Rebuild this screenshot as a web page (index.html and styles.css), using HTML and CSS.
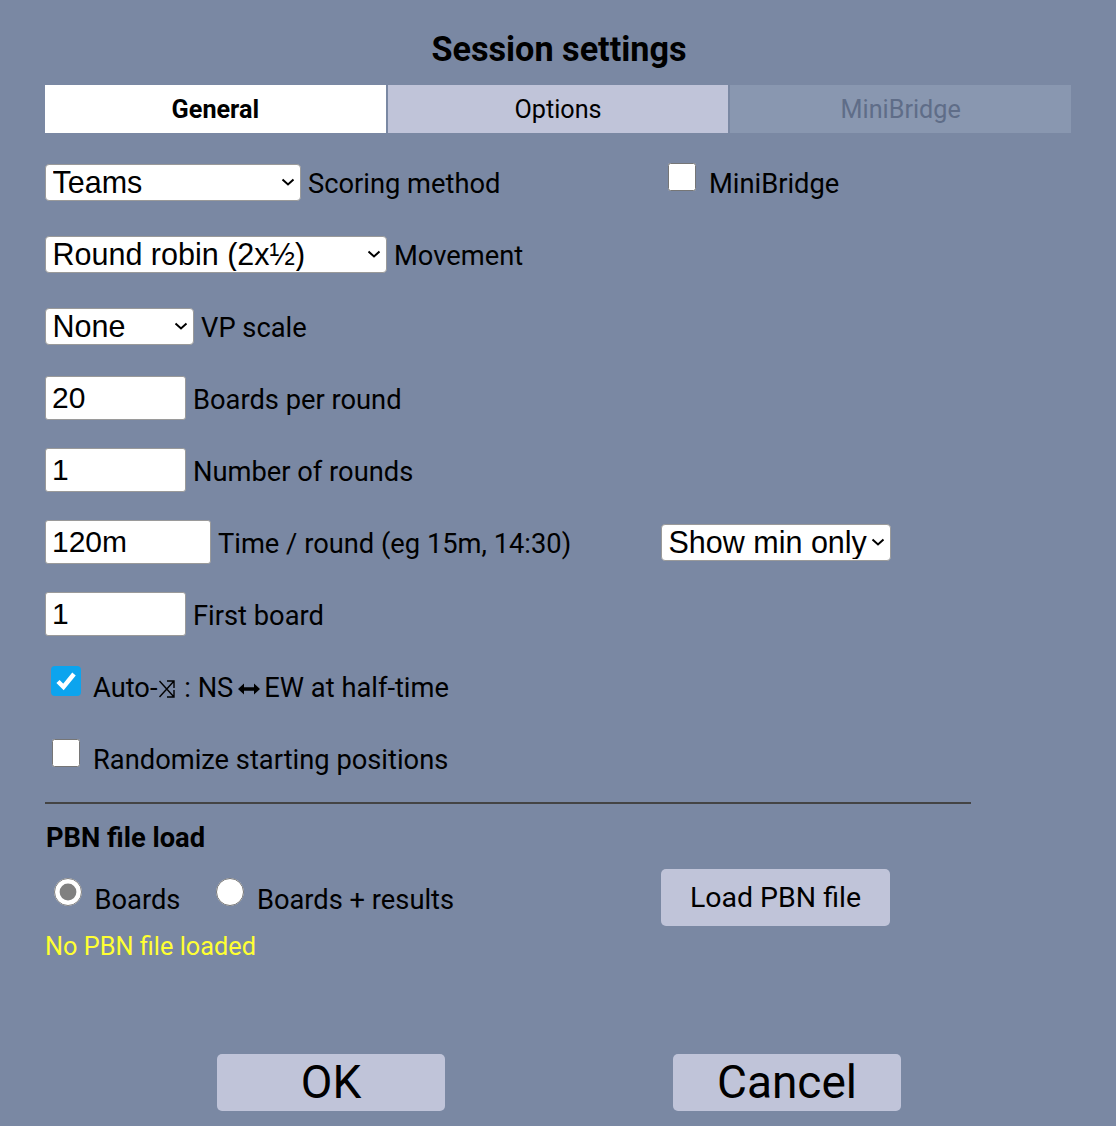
FILE: index.html
```html
<!DOCTYPE html>
<html lang="en">
<head>
<meta charset="utf-8">
<title>Session settings</title>
<link rel="stylesheet" href="styles.css">
</head>
<body>
<main class="dialog">
  <h1 class="title">Session settings</h1>
  <nav class="tabs">
    <div class="tab tab-active">General</div>
    <div class="tab">Options</div>
    <div class="tab tab-disabled">MiniBridge</div>
  </nav>
  <section class="form">
    <div class="row">
      <div class="left">
        <select class="sel sel-scoring"><option>Teams</option></select>
        <span class="label">Scoring method</span>
      </div>
      <div class="right right-check">
        <input type="checkbox" class="check">
        <span class="label">MiniBridge</span>
      </div>
    </div>
    <div class="row">
      <div class="left">
        <select class="sel sel-movement"><option>Round robin (2x½)</option></select>
        <span class="label">Movement</span>
      </div>
    </div>
    <div class="row">
      <div class="left">
        <select class="sel sel-vp"><option>None</option></select>
        <span class="label">VP scale</span>
      </div>
    </div>
    <div class="row">
      <div class="left">
        <input class="num" type="text" value="20">
        <span class="label">Boards per round</span>
      </div>
    </div>
    <div class="row">
      <div class="left">
        <input class="num" type="text" value="1">
        <span class="label">Number of rounds</span>
      </div>
    </div>
    <div class="row">
      <div class="left">
        <input class="num num-wide" type="text" value="120m">
        <span class="label">Time / round (eg 15m, 14:30)</span>
      </div>
      <div class="right">
        <select class="sel sel-show"><option>Show min only</option></select>
      </div>
    </div>
    <div class="row">
      <div class="left">
        <input class="num" type="text" value="1">
        <span class="label">First board</span>
      </div>
    </div>
    <div class="row">
      <div class="left left-check">
        <input type="checkbox" class="check check-on" checked>
        <span class="label">Auto-<svg class="shuffle" viewBox="0 0 18 20" width="18" height="20"><path d="M1.500 2 16 18M1.500 18 16 2M9 2h7v7M16 11v7H9" fill="none" stroke="#000" stroke-width="1.400"/></svg> : NS<svg class="swap" viewBox="0 0 22 12" width="22" height="12"><path d="M0 6 6 .5v3.800h10V.5L22 6l-6 5.500V7.700H6v3.800z" fill="#000"/></svg>EW at half-time</span>
      </div>
    </div>
    <div class="row">
      <div class="left left-check">
        <input type="checkbox" class="check check-off">
        <span class="label">Randomize starting positions</span>
      </div>
    </div>
  </section>
  <hr class="divider">
  <h2 class="subhead">PBN file load</h2>
  <div class="pbn">
    <div class="left radios">
      <input type="radio" name="pbn" class="radio" checked>
      <span class="label radio-label">Boards</span>
      <input type="radio" name="pbn" class="radio">
      <span class="label">Boards + results</span>
    </div>
    <button class="btn btn-load" type="button">Load PBN file</button>
  </div>
  <p class="status">No PBN file loaded</p>
  <div class="actions">
    <button class="btn btn-big" type="button">OK</button>
    <button class="btn btn-big" type="button">Cancel</button>
  </div>
</main>
</body>
</html>
```
FILE: styles.css
```css
* { box-sizing: border-box; }
html, body { margin: 0; height: 100%; }
body {
  background: #7a88a3;
  color: #000;
  font-family: Roboto, "Liberation Sans", sans-serif;
  overflow: hidden;
}
.dialog { width: 1116px; height: 1126px; padding: 27px 45px 0; }
.title {
  margin: 0;
  height: 58px;
  font-size: 34.200px;
  line-height: 44px;
  font-weight: 700;
  text-align: center;
  width: 1028px;
}
.tabs { display: flex; gap: 2px; width: 1026px; height: 48px; }
.tab {
  flex: 1;
  display: flex;
  align-items: center;
  justify-content: center;
  background: #c0c4d9;
  font-size: 25.200px;
}
.tab-active { background: #fff; font-weight: 700; }
.tab-disabled { background: #8997b0; color: #5f6d88; }
.form { padding-top: 13px; }
.row { display: flex; height: 72px; align-items: center; }
.left { width: 616px; display: flex; align-items: center; gap: 7px; }
.right { display: flex; align-items: center; }
.label { font-size: 27.300px; line-height: 36px; padding-top: 4px; white-space: nowrap; }
.sel {
  appearance: none;
  -webkit-appearance: none;
  height: 37px;
  margin: 0;
  padding: 0 0 0 6.500px;
  font-family: "Liberation Sans", Arial, sans-serif;
  font-size: 30.500px;
  background-color: #fff;
  background-image: url("data:image/svg+xml,%3Csvg xmlns='http://www.w3.org/2000/svg' width='14' height='8' viewBox='0 0 14 8'%3E%3Cpath d='M1.500 1.500 7 6.500l5.500-5' fill='none' stroke='%23000' stroke-width='2'/%3E%3C/svg%3E");
  background-repeat: no-repeat;
  background-position: right 5px center;
  color: #000;
  border: 1px solid #9a9a9a;
  border-radius: 4px;
}
.sel-scoring { width: 256px; }
.sel-movement { width: 342px; }
.sel-vp { width: 149px; }
.sel-show { width: 230px; }
.num {
  height: 44px;
  width: 141px;
  padding: 0 6px;
  font-family: "Liberation Sans", Arial, sans-serif;
  font-size: 30px;
  border: 1px solid #9a9a9a;
  border-radius: 3px;
  background: #fff;
}
.num-wide { width: 166px; }
.check { width: 28px; height: 28px; margin: 0; flex: none; }
.left-check { gap: 13px; padding-left: 7px; }
.left-check .check { position: relative; top: -5px; }
.right-check { gap: 13px; padding-left: 7px; }
.right-check .check { position: relative; top: -5px; }
.check-on {
  appearance: none;
  -webkit-appearance: none;
  width: 30px;
  height: 30px;
  margin-left: -1px;
  margin-right: -1px;
  border-radius: 4px;
  background-color: #0ca4ee;
  background-image: url("data:image/svg+xml,%3Csvg xmlns='http://www.w3.org/2000/svg' width='30' height='30' viewBox='0 0 30 30'%3E%3Cpath d='M7 15.500 12.500 21 23 8' fill='none' stroke='%23fff' stroke-width='4.500'/%3E%3C/svg%3E");
}
.shuffle { vertical-align: -2px; margin: 0 1px; }
.swap { vertical-align: 2px; margin: 0 4px 0 5px; }
.divider { width: 926px; height: 2px; margin: 8px 0 0; border: 0; background: #444; }
.subhead { margin: 14px 0 0 1px; font-size: 27.300px; line-height: 40px; font-weight: 700; }
.pbn { display: flex; align-items: flex-start; margin-top: 11px; height: 57px; }
.radios { gap: 12.500px; padding: 9px 0 0 9px; }
.radio { width: 28px; height: 28px; margin: 0; accent-color: #808080; position: relative; top: -6px; flex: none; }
.radio-label { margin-right: 23.500px; }
.btn {
  background: #c0c4d9;
  border: 0;
  border-radius: 5px;
  color: #000;
  font-family: Roboto, sans-serif;
  padding: 0;
}
.btn-load { width: 229px; height: 57px; font-size: 28.500px; }
.status { margin: 3px 0 0; font-size: 25.300px; line-height: 36px; color: #ffff33; }
.actions { display: flex; gap: 228px; margin: 89px 0 0 172px; }
.btn-big { width: 228px; height: 57px; padding-bottom: 2px; font-size: 46px; }
```
